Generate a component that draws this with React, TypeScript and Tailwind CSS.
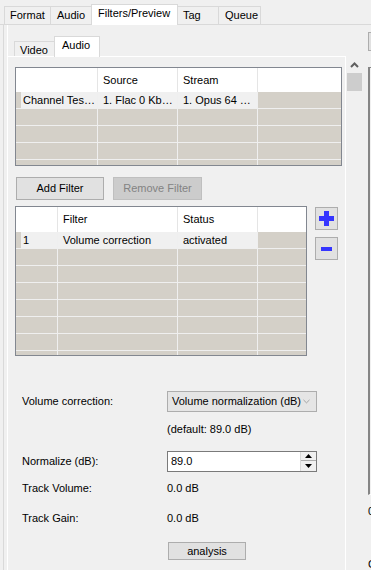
import { ChevronDown } from "lucide-react";

const topTabs = [
  { label: "Format", cls: "w-[46px] h-[18px] border-l border-t pl-[5px] bg-[#f0f0f0]" },
  { label: "Audio", cls: "w-[41px] h-[18px] border-l border-t pl-[6px] bg-[#f0f0f0]" },
  {
    label: "Filters/Preview",
    cls: "w-[87px] h-[21px] border-l border-t border-r pl-[6px] -mb-px bg-white relative z-10 pb-[3px]",
  },
  { label: "Tag", cls: "w-[40px] h-[18px] border-t pl-[5px] bg-[#f0f0f0]" },
  { label: "Queue", cls: "w-[43px] h-[18px] border-l border-t border-r pl-[6px] bg-[#f0f0f0]" },
];

function Table({
  width,
  height,
  headerH,
  cols,
  header,
  row,
}: {
  width: string;
  height: string;
  headerH: string;
  cols: string[];
  header: string[];
  row: string[];
}) {
  const empty = [0, 1, 2, 3, 4, 5, 6, 7];
  return (
    <div className={`${width} ${height} border border-[#828790] flex flex-col overflow-hidden bg-[#d4d0c8]`}>
      {/* Header */}
      <div className={`flex ${headerH} bg-white shrink-0`}>
        <div className="w-[5px] shrink-0" />
        {cols.map((c, i) => (
          <div
            key={i}
            className={`${c} shrink-0 flex items-center pl-[5px] ${i > 0 ? "border-l border-[#e5e5e5]" : ""}`}
          >
            {header[i]}
          </div>
        ))}
        <div className="flex-1 border-l border-[#e5e5e5]" />
      </div>

      {/* First row */}
      <div className="flex h-[17px] shrink-0 border-b border-[#efefef]">
        <div className="w-[5px] shrink-0 bg-[#d4d0c8]" />
        {cols.map((c, i) => (
          <div
            key={i}
            className={`${c} shrink-0 flex items-center bg-[#f0f0f0] whitespace-nowrap overflow-hidden ${i > 0 ? "border-l border-[#efefef] pl-[5px]" : "pl-[2px]"}`}
          >
            {row[i]}
          </div>
        ))}
        <div className="flex-1 border-l border-[#efefef]" />
      </div>

      {/* Empty rows */}
      {empty.map((r) => (
        <div key={r} className="flex h-[17px] shrink-0 border-b border-[#efefef]">
          <div className="w-[5px] shrink-0" />
          {cols.map((c, i) => (
            <div key={i} className={`${c} shrink-0 ${i > 0 ? "border-l border-[#efefef]" : ""}`} />
          ))}
          <div className="flex-1 border-l border-[#efefef]" />
        </div>
      ))}
    </div>
  );
}

export default function App() {
  return (
    <div className="w-[371px] h-[570px] bg-[#f0f0f0] overflow-hidden text-[11px] leading-none text-black font-['Liberation_Sans',Arial,sans-serif]">
      {/* Top tabs */}
      <div className="flex items-end h-[25px] pl-[4px] border-b border-[#d9d9d9] w-[420px]">
        {topTabs.map((t) => (
          <div
            key={t.label}
            className={`${t.cls} border-[#d9d9d9] flex items-center shrink-0 whitespace-nowrap`}
          >
            {t.label}
          </div>
        ))}
      </div>

      {/* Outer panel */}
      <div className="ml-[3px] border-l border-[#d9d9d9] flex h-[545px] w-[420px]">
        {/* Inner tab widget */}
        <div className="ml-[3px] border-l border-white w-[339px] flex flex-col shrink-0">
          <div className="h-[32px] pl-[6px] flex items-end border-b border-white">
            <div className="w-[40px] h-[15px] border-l border-t border-[#d9d9d9] pl-[5px] pt-[2px] flex items-center">
              Video
            </div>
            <div className="w-[46px] h-[21px] border-l border-t border-r border-[#d9d9d9] -mb-px bg-white relative z-10 pl-[7px] pb-[4px] flex items-center">
              Audio
            </div>
          </div>

          <div className="flex-1 border-r border-white pl-[7px] pt-[10px] flex flex-col">
            <Table
              width="w-[327px]"
              height="h-[99px]"
              headerH="h-[24px]"
              cols={["w-[76px]", "w-[80px]", "w-[80px]"]}
              header={["", "Source", "Stream"]}
              row={["Channel Tes…", "1. Flac 0 Kb…", "1. Opus 64 …"]}
            />

            {/* Buttons */}
            <div className="flex mt-[11px]">
              <button className="ml-[1px] w-[88px] h-[23px] bg-[#e1e1e1] border border-[#adadad] flex items-center justify-center">
                Add Filter
              </button>
              <button className="ml-[9px] w-[89px] h-[23px] bg-[#cccccc] border border-[#bfbfbf] text-[#838383] flex items-center justify-center">
                Remove Filter
              </button>
            </div>

            {/* Filter table */}
            <div className="flex items-start mt-[6px]">
              <Table
                width="w-[292px]"
                height="h-[150px]"
                headerH="h-[25px]"
                cols={["w-[36px]", "w-[120px]", "w-[80px]"]}
                header={["", "Filter", "Status"]}
                row={["1", "Volume correction", "activated"]}
              />
              <div className="ml-[8px] mt-[1px] flex flex-col gap-[7px]">
                <button className="w-[23px] h-[23px] bg-[#e1e1e1] border border-[#adadad] flex items-center justify-center">
                  <svg width="15" height="15" viewBox="0 0 15 15">
                    <rect x="5" y="0" width="5" height="15" fill="#3535ff" />
                    <rect x="0" y="5" width="15" height="5" fill="#3535ff" />
                  </svg>
                </button>
                <button className="w-[23px] h-[23px] bg-[#e1e1e1] border border-[#adadad] flex items-center justify-center">
                  <svg width="11" height="4" viewBox="0 0 11 4">
                    <rect x="0" y="0" width="11" height="4" fill="#3535ff" />
                  </svg>
                </button>
              </div>
            </div>

            {/* Volume correction */}
            <div className="flex items-center h-[21px] mt-[35px]">
              <div className="w-[152px] pl-[7px] shrink-0">Volume correction:</div>
              <div className="w-[150px] h-[21px] bg-[#e5e5e5] border border-[#adadad] flex items-center pl-[4px] pr-[4px] justify-between whitespace-nowrap">
                <span>Volume normalization (dB)</span>
                <ChevronDown size={11} strokeWidth={1} color="#555" />
              </div>
            </div>
            <div className="ml-[152px] mt-[9px] h-[16px] flex items-center">(default: 89.0 dB)</div>

            {/* Normalize */}
            <div className="flex items-center h-[21px] mt-[14px]">
              <div className="w-[152px] pl-[7px] shrink-0">Normalize (dB):</div>
              <div className="w-[150px] h-[21px] bg-white border border-[#7a7a7a] flex items-center">
                <span className="pl-[3px] flex-1">89.0</span>
                <div className="w-[16px] h-[19px] flex flex-col border-l border-[#d9d9d9]">
                  <div className="h-[9px] border-b border-[#adadad] bg-[#f0f0f0] flex items-center justify-center">
                    <svg width="7" height="4" viewBox="0 0 7 4">
                      <path d="M3.5 0 L7 4 L0 4 Z" fill="#000" />
                    </svg>
                  </div>
                  <div className="flex-1 bg-[#f0f0f0] flex items-center justify-center">
                    <svg width="7" height="4" viewBox="0 0 7 4">
                      <path d="M0 0 L7 0 L3.5 4 Z" fill="#000" />
                    </svg>
                  </div>
                </div>
              </div>
            </div>

            <div className="flex items-center h-[21px] mt-[6px]">
              <div className="w-[152px] pl-[7px] shrink-0">Track Volume:</div>
              <div>0.0 dB</div>
            </div>
            <div className="flex items-center h-[21px] mt-[9px]">
              <div className="w-[152px] pl-[7px] shrink-0">Track Gain:</div>
              <div>0.0 dB</div>
            </div>

            <button className="ml-[153px] mt-[13px] w-[78px] h-[18px] bg-[#e1e1e1] border border-[#adadad] flex items-center justify-center">
              analysis
            </button>
          </div>
        </div>

        {/* Scrollbar */}
        <div className="w-[17px] shrink-0 flex flex-col items-center pt-[33px]">
          <div className="h-[14px] flex items-center justify-center">
            <svg width="9" height="6" viewBox="0 0 9 6">
              <path d="M1 5 L4.5 1.5 L8 5" stroke="#606060" strokeWidth="2" fill="none" />
            </svg>
          </div>
          <div className="w-[15px] h-[18px] bg-[#cdcdcd] mt-[1px] -ml-[1px]" />
        </div>

        {/* Cut-off right column */}
        <div className="ml-[5px] w-[40px] shrink-0 flex flex-col">
          <div className="mt-[7px] h-[19px] bg-[#e1e1e1] border border-[#adadad]" />
          <div className="mt-[16px] h-[430px] border-l-2 border-t border-[#858585] border-b border-b-white" />
          <div className="mt-[11px] leading-none">0</div>
          <div className="mt-[42px] leading-none">C</div>
        </div>
      </div>
    </div>
  );
}
